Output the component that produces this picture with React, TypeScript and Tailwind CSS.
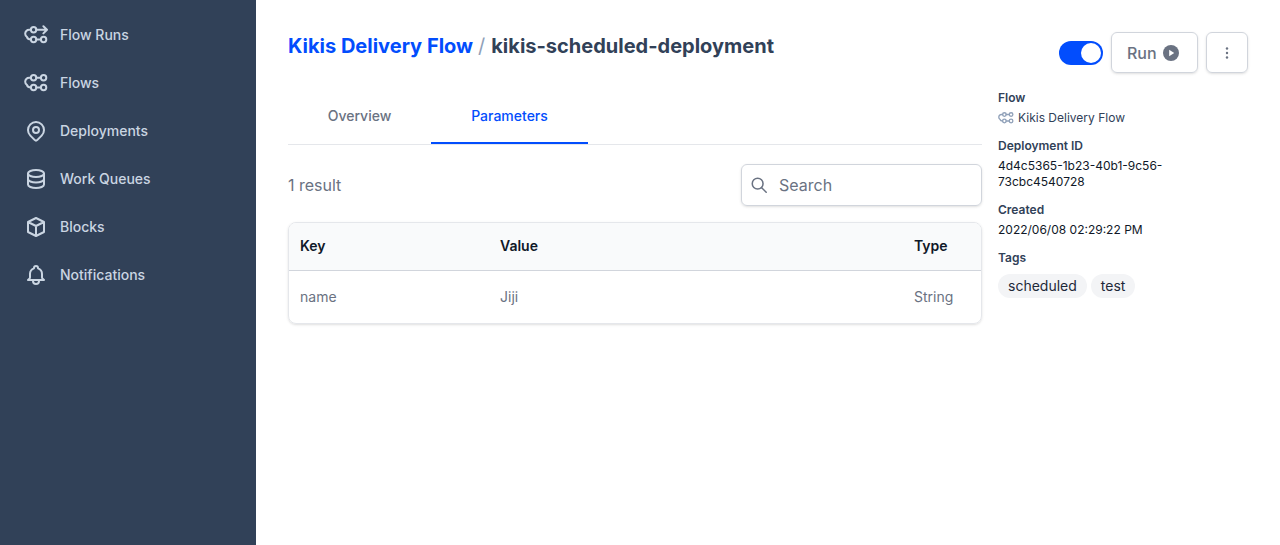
import React from "react";

const FlowGlyph = ({ runs = false, className = "" }: { runs?: boolean; className?: string }) => (
  <svg viewBox="0 0 24 24" fill="none" stroke="currentColor" strokeWidth={2} strokeLinecap="round" strokeLinejoin="round" className={className}>
    <path d="M6.9 6.8H5.2C2.8 6.8 1.2 8.6 1.2 10.8c0 1.3.6 2.4 1.7 3.1.5 1.6 2 2.6 4 2.6" />
    <circle cx="9.6" cy="6.8" r="2.7" />
    {runs ? (
      <path d="M12.3 6.8h10.5M19.4 3.2l3.6 3.6-3.6 3.6" />
    ) : (
      <>
        <circle cx="19.6" cy="6.8" r="2.7" />
        <path d="M12.3 6.8h4.6" />
      </>
    )}
    <circle cx="9.6" cy="16.5" r="2.7" />
    <circle cx="19.6" cy="16.5" r="2.7" />
    <path d="M12.3 16.5h4.6" />
  </svg>
);

const Pin = () => (
  <svg viewBox="0 0 24 24" fill="none" stroke="currentColor" strokeWidth={2} strokeLinecap="round" strokeLinejoin="round" className="w-6 h-6">
    <path d="M17.657 16.657 13.414 20.9a2 2 0 0 1-2.827 0l-4.244-4.243a8 8 0 1 1 11.314 0Z" />
    <circle cx="12" cy="11" r="3" />
  </svg>
);

const Database = () => (
  <svg viewBox="0 0 24 24" fill="none" stroke="currentColor" strokeWidth={2} strokeLinecap="round" strokeLinejoin="round" className="w-6 h-6">
    <ellipse cx="12" cy="6.5" rx="8" ry="3.5" />
    <path d="M4 6.5v11c0 1.9 3.6 3.5 8 3.5s8-1.6 8-3.5v-11" />
    <path d="M4 12c0 1.9 3.6 3.5 8 3.5s8-1.6 8-3.5" />
  </svg>
);

const Cube = () => (
  <svg viewBox="0 0 24 24" fill="none" stroke="currentColor" strokeWidth={2} strokeLinecap="round" strokeLinejoin="round" className="w-6 h-6">
    <path d="M20 7 12 3 4 7m16 0-8 4m8-4v10l-8 4m0-10L4 7m8 4v10M4 7v10l8 4" />
  </svg>
);

const Bell = () => (
  <svg viewBox="0 0 24 24" fill="none" stroke="currentColor" strokeWidth={2} strokeLinecap="round" strokeLinejoin="round" className="w-6 h-6">
    <path d="M15 17h5l-1.405-1.405A2.032 2.032 0 0 1 18 14.158V11a6.002 6.002 0 0 0-4-5.659V5a2 2 0 1 0-4 0v.341C7.67 6.165 6 8.388 6 11v3.159c0 .538-.214 1.055-.595 1.436L4 17h5m6 0v1a3 3 0 1 1-6 0v-1m6 0H9" />
  </svg>
);

const nav: { label: string; icon: React.ReactNode }[] = [
  { label: "Flow Runs", icon: <FlowGlyph runs className="w-6 h-6" /> },
  { label: "Flows", icon: <FlowGlyph className="w-6 h-6" /> },
  { label: "Deployments", icon: <Pin /> },
  { label: "Work Queues", icon: <Database /> },
  { label: "Blocks", icon: <Cube /> },
  { label: "Notifications", icon: <Bell /> },
];

const Detail = ({ label, children }: { label: string; children: React.ReactNode }) => (
  <div className="mb-[13px]">
    <div className="text-xs leading-4 font-semibold text-slate-700 mb-1">{label}</div>
    <div className="-mb-px">{children}</div>
  </div>
);

export default function App() {
  return (
    <div className="flex h-screen min-h-[545px] bg-white font-['Inter',sans-serif] overflow-hidden">
      <aside className="w-64 shrink-0 bg-slate-700 pt-[11px]">
        {nav.map((n) => (
          <div key={n.label} className="flex items-center h-12 pl-6 gap-3 text-slate-300">
            {n.icon}
            <span className="text-sm font-medium">{n.label}</span>
          </div>
        ))}
      </aside>

      <main className="flex-1 flex gap-4 pl-8 pr-8 pt-8">
        <div className="w-[694px] shrink-0">
          <h1 className="text-xl leading-7 font-bold text-slate-700 mb-7 flex">
            <span className="text-[#024dfd]">Kikis Delivery Flow</span>
            <span className="text-slate-400 font-normal ml-[5px] mr-[6px]">/</span>
            <span>kikis-scheduled-deployment</span>
          </h1>

          <div className="flex border-b border-gray-200 h-[57px] text-sm font-medium">
            <div className="w-[143px] flex items-center justify-center text-gray-500">Overview</div>
            <div className="w-[157px] flex items-center justify-center text-[#024dfd] border-b-2 border-[#024dfd] h-[56px] pt-[2px]">Parameters</div>
          </div>

          <div className="flex items-center justify-between mt-[19px]">
            <span className="text-base text-gray-500">1 result</span>
            <div className="w-[241px] h-[42px] border border-gray-300 rounded-md shadow-sm flex items-center pl-2 gap-[11px] text-gray-500">
              <svg viewBox="0 0 20 20" fill="none" stroke="currentColor" strokeWidth={1.7} strokeLinecap="round" className="w-[18px] h-[18px]">
                <circle cx="8.5" cy="8.5" r="6" />
                <path d="m13 13 5 5" />
              </svg>
              <span className="text-base">Search</span>
            </div>
          </div>

          <div className="mt-4 rounded-lg border border-gray-200 shadow-sm overflow-hidden text-sm">
            <div className="grid grid-cols-[200px_414px_1fr] px-[11px] h-12 pb-[2px] items-center bg-gray-50 border-b border-gray-300 font-semibold text-gray-900">
              <div>Key</div>
              <div>Value</div>
              <div>Type</div>
            </div>
            <div className="grid grid-cols-[200px_414px_1fr] px-[11px] h-[52px] items-center text-gray-500">
              <div>name</div>
              <div>Jiji</div>
              <div>String</div>
            </div>
          </div>
        </div>

        <div className="flex-1 min-w-0">
          <div className="flex items-center justify-end gap-2 h-[41px]">
            <div className="w-11 h-6 rounded-full bg-[#024dfd] flex items-center justify-end pr-[2px] mt-px">
              <div className="w-5 h-5 rounded-full bg-white" />
            </div>
            <button className="w-[87px] h-[41px] rounded-md border border-gray-300 shadow-sm flex items-center justify-start pl-[15px] gap-[6px] text-base font-medium text-gray-500">
              Run
              <svg viewBox="0 0 16 16" className="w-4 h-4">
                <circle cx="8" cy="8" r="8" fill="currentColor" />
                <path d="M6.2 4.8v6.4L11.2 8z" fill="#fff" />
              </svg>
            </button>
            <button className="w-[42px] h-[41px] rounded-md border border-gray-300 shadow-sm flex items-center justify-center text-gray-500">
              <svg viewBox="0 0 16 16" fill="currentColor" className="w-4 h-4">
                <circle cx="8" cy="3.5" r="1.2" />
                <circle cx="8" cy="8" r="1.2" />
                <circle cx="8" cy="12.5" r="1.2" />
              </svg>
            </button>
          </div>

          <div className="mt-[17px] w-[180px]">
            <Detail label="Flow">
              <div className="flex items-center gap-1 text-xs leading-4 text-slate-700">
                <FlowGlyph className="w-4 h-4 text-slate-400" />
                Kikis Delivery Flow
              </div>
            </Detail>
            <Detail label="Deployment ID">
              <div className="text-xs leading-4 text-gray-900 break-words">4d4c5365-1b23-40b1-9c56-73cbc4540728</div>
            </Detail>
            <Detail label="Created">
              <div className="text-xs leading-4 text-gray-900">2022/06/08 02:29:22 PM</div>
            </Detail>
            <div>
              <div className="text-xs leading-4 font-semibold text-slate-700">Tags</div>
              <div className="flex gap-1 mt-2">
                <span className="px-[10px] h-6 flex items-center rounded-full bg-gray-100 text-sm text-gray-800">scheduled</span>
                <span className="px-[10px] h-6 flex items-center rounded-full bg-gray-100 text-sm text-gray-800">test</span>
              </div>
            </div>
          </div>
        </div>
      </main>
    </div>
  );
}
